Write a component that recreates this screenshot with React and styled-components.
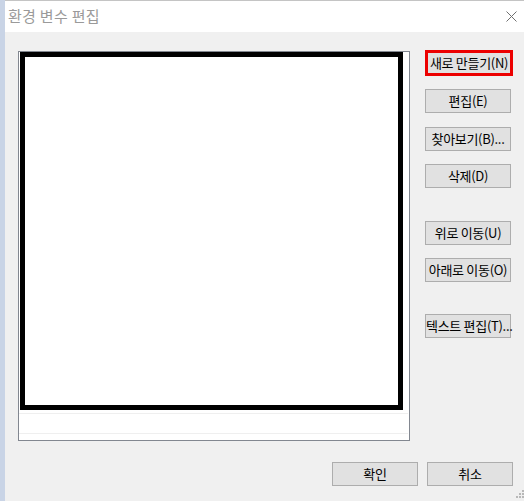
import React from 'react';
import styled, { createGlobalStyle } from 'styled-components';

const GlobalStyle = createGlobalStyle`
  html, body {
    margin: 0;
    padding: 0;
    width: 524px;
    height: 501px;
    overflow: hidden;
    background: #f0f0f0;
  }
  body {
    font-family: "Noto Sans CJK KR", "Noto Sans", sans-serif;
  }
`;

const Screen = styled.div`
  display: flex;
  width: 524px;
  height: 501px;
`;

const SideStrip = styled.div`
  width: 5px;
  flex: none;
  background: #c9d4e6;
`;

const Dialog = styled.div`
  flex: 1;
  display: flex;
  flex-direction: column;
  position: relative;
  background: #f0f0f0;
`;

const TitleBar = styled.div`
  height: 32px;
  flex: none;
  display: flex;
  align-items: center;
  justify-content: space-between;
  padding: 0 9px 1px 3px;
  background: #ffffff;
  border-top: 1px solid #c4c4c4;
  box-sizing: border-box;
`;

const Title = styled.div`
  font-size: 15px;
  color: #9a9a9a;
  letter-spacing: 0.3px;
  line-height: 20px;
`;

const CloseIcon = styled.svg`
  width: 11px;
  height: 11px;
  margin-top: 1px;
`;

const Body = styled.div`
  display: flex;
  padding: 18px 13px 0 13px;
  gap: 15px;
`;

const ListBox = styled.div`
  width: 392px;
  height: 390px;
  margin-top: 1px;
  box-sizing: border-box;
  border: 1px solid #828790;
  background: #ffffff;
  display: flex;
  flex-direction: column;
  overflow: hidden;
`;

const EditBox = styled.div`
  flex: none;
  width: 383px;
  height: 358px;
  margin-left: 1px;
  box-sizing: border-box;
  border: 5px solid #000000;
  background: #ffffff;
`;

const ListRow = styled.div`
  flex: none;
  height: 19px;
  margin-top: ${p => p.$top || 0}px;
  margin-right: 1px;
  border-top: 1px solid #efefef;
`;

const ButtonColumn = styled.div`
  display: flex;
  flex-direction: column;
  align-items: flex-start;
`;

const Button = styled.button`
  flex: none;
  width: 86px;
  height: 24px;
  margin-top: ${p => p.$top || 0}px;
  padding: 0;
  box-sizing: border-box;
  border: 1px solid #adadad;
  background: #e1e1e1;
  color: #000000;
  font-family: "Noto Sans CJK KR", "Noto Sans", sans-serif;
  font-size: 13px;
  line-height: 20px;
  white-space: nowrap;
  letter-spacing: -0.3px;
  cursor: default;
`;

const FocusButton = styled(Button)`
  width: 88px;
  height: 26px;
  border: 3px solid #ec0000;
`;

const Footer = styled.div`
  display: flex;
  justify-content: flex-end;
  gap: 9px;
  padding: 21px 13px 0 0;
`;

const Grip = styled.svg`
  position: absolute;
  right: 2px;
  bottom: 3px;
  width: 8px;
  height: 8px;
`;

const App = () => {
  return (
    <>
      <GlobalStyle />
      <Screen>
        <SideStrip />
        <Dialog>
          <TitleBar>
            <Title>환경 변수 편집</Title>
            <CloseIcon viewBox="0 0 11 11">
              <path d="M0.5 0.5 L10.5 10.5 M10.5 0.5 L0.5 10.5" stroke="#6f6f6f" strokeWidth="1" fill="none" />
            </CloseIcon>
          </TitleBar>
          <Body>
            <ListBox>
              <EditBox />
              <ListRow $top={3} />
              <ListRow />
            </ListBox>
            <ButtonColumn>
              <FocusButton>새로 만들기(N)</FocusButton>
              <Button $top={13}>편집(E)</Button>
              <Button $top={14}>찾아보기(B)...</Button>
              <Button $top={13}>삭제(D)</Button>
              <Button $top={33}>위로 이동(U)</Button>
              <Button $top={13}>아래로 이동(O)</Button>
              <Button $top={32}>텍스트 편집(T)...</Button>
            </ButtonColumn>
          </Body>
          <Footer>
            <Button>확인</Button>
            <Button>취소</Button>
          </Footer>
          <Grip viewBox="0 0 8 8">
            <rect x="6" y="0" width="2" height="2" fill="#b8b8b8" />
            <rect x="3" y="3" width="2" height="2" fill="#b8b8b8" />
            <rect x="6" y="3" width="2" height="2" fill="#b8b8b8" />
            <rect x="0" y="6" width="2" height="2" fill="#b8b8b8" />
            <rect x="3" y="6" width="2" height="2" fill="#b8b8b8" />
            <rect x="6" y="6" width="2" height="2" fill="#b8b8b8" />
          </Grip>
        </Dialog>
      </Screen>
    </>
  );
};

export default App;
